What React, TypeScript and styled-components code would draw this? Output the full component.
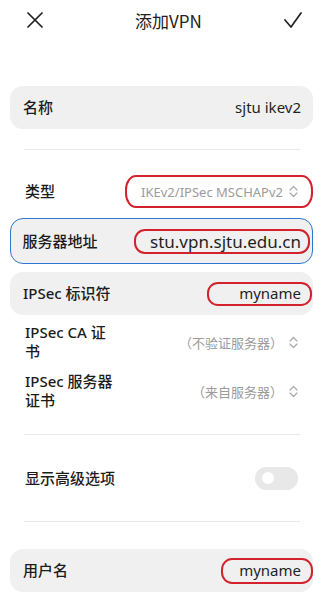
import React from 'react';
import styled, { createGlobalStyle } from 'styled-components';

const GlobalStyle = createGlobalStyle`
  html, body {
    margin: 0;
    padding: 0;
    background: #ffffff;
  }
  body {
    font-family: 'Noto Sans', 'Noto Sans CJK SC', sans-serif;
    color: #1f1f1f;
  }
`;

const Page = styled.div`
  width: 324px;
  height: 595px;
  overflow: hidden;
  background: #ffffff;
`;

const Header = styled.div`
  height: 40px;
  display: flex;
  align-items: center;
  justify-content: space-between;
  padding: 0 22px 0 27px;
`;

const HeaderIcon = styled.svg`
  display: block;
  flex: none;
`;

const Title = styled.div`
  font-size: 17px;
  color: #222;
  font-family: 'Noto Sans CJK SC', 'Noto Sans', sans-serif;
  margin-left: 10px;
`;

const Body = styled.div`
  display: flex;
  flex-direction: column;
  padding: 0 11px 0 10px;
`;

const Card = styled.div<{ $top: number; $focused?: boolean }>`
  box-sizing: border-box;
  margin-top: ${({ $top }) => $top}px;
  height: ${({ $focused }) => ($focused ? 46 : 43)}px;
  display: flex;
  align-items: center;
  justify-content: space-between;
  padding: ${({ $focused }) => ($focused ? '0 11px 0 11.5px' : '0 12px 0 13px')};
  background: #f0f0f0;
  border-radius: 13px;
  border: ${({ $focused }) => ($focused ? '1.5px solid #2b78cc' : 'none')};
`;

const Row = styled.div<{ $top: number; $height: number }>`
  margin-top: ${({ $top }) => $top}px;
  height: ${({ $height }) => $height}px;
  display: flex;
  align-items: center;
  justify-content: space-between;
  padding: 0 15px;
`;

const Divider = styled.div<{ $top: number }>`
  margin: ${({ $top }) => $top}px 13px 0 14px;
  height: 1px;
  background: #e8e8e8;
`;

const Label = styled.div<{ $narrow?: boolean }>`
  font-family: 'Noto Sans', 'Noto Sans CJK SC', sans-serif;
  font-size: 15px;
  font-weight: 500;
  line-height: 19px;
  color: #1c1c1c;
  max-width: ${({ $narrow }) => ($narrow ? '90px' : 'none')};
`;

const Value = styled.div<{ $size?: number }>`
  font-family: 'Noto Sans', 'Noto Sans CJK SC', sans-serif;
  font-size: ${({ $size }) => $size ?? 15}px;
  line-height: 21px;
  color: #1f1f1f;
  white-space: nowrap;
`;

const Picker = styled.div`
  display: flex;
  align-items: center;
  gap: 6px;
  font-family: 'Noto Sans', 'Noto Sans CJK SC', sans-serif;
  font-size: 13px;
  color: #9b9b9b;
  white-space: nowrap;
`;

const Marked = styled.div<{ $left: number; $right: number; $height: number }>`
  box-sizing: border-box;
  display: flex;
  align-items: center;
  height: ${({ $height }) => $height}px;
  padding: 0 ${({ $right }) => $right}px 0 ${({ $left }) => $left}px;
  margin-right: ${({ $right }) => -($right + 2)}px;
  border: 2px solid #d3222c;
  border-radius: 11px / 45%;
`;

const Toggle = styled.div`
  width: 43px;
  height: 23px;
  border-radius: 12px;
  background: #e8e8e8;
  display: flex;
  align-items: center;
  padding-left: 7px;
  box-sizing: border-box;
`;

const Knob = styled.div`
  width: 12px;
  height: 12px;
  border-radius: 50%;
  background: #ffffff;
`;

const UpDown = () => (
  <svg width="9" height="13" viewBox="0 0 9 13" fill="none" stroke="#a8a8a8" strokeWidth="1.2" strokeLinecap="round" strokeLinejoin="round">
    <polyline points="1,5 4.5,1.5 8,5" />
    <polyline points="1,8 4.5,11.5 8,8" />
  </svg>
);

export default function App() {
  return (
    <Page>
      <GlobalStyle />
      <Header>
        <HeaderIcon width="16" height="16" viewBox="0 0 16 16" fill="none" stroke="#222" strokeWidth="1.7" strokeLinecap="round">
          <line x1="1" y1="1" x2="15" y2="15" />
          <line x1="15" y1="1" x2="1" y2="15" />
        </HeaderIcon>
        <Title>添加VPN</Title>
        <HeaderIcon width="18" height="17" viewBox="0 0 18 17" fill="none" stroke="#222" strokeWidth="1.7" strokeLinecap="round" strokeLinejoin="round">
          <polyline points="1,8 7,15 17,1" />
        </HeaderIcon>
      </Header>

      <Body>
        <Card $top={46}>
          <Label>名称</Label>
          <Value>sjtu ikev2</Value>
        </Card>

        <Divider $top={20} />

        <Row $top={23} $height={37}>
          <Label>类型</Label>
          <Marked $left={14} $right={13} $height={33}>
            <Picker>
              IKEv2/IPSec MSCHAPv2
              <UpDown />
            </Picker>
          </Marked>
        </Row>

        <Card $top={8} $focused>
          <Label>服务器地址</Label>
          <Marked $left={14} $right={7} $height={25}>
            <Value $size={17}>stu.vpn.sjtu.edu.cn</Value>
          </Marked>
        </Card>

        <Card $top={8}>
          <Label>IPSec 标识符</Label>
          <Marked $left={30} $right={9} $height={24}>
            <Value>myname</Value>
          </Marked>
        </Card>

        <Row $top={7} $height={40}>
          <Label $narrow>IPSec CA 证书</Label>
          <Picker>
            （不验证服务器）
            <UpDown />
          </Picker>
        </Row>

        <Row $top={8} $height={42}>
          <Label $narrow>IPSec 服务器证书</Label>
          <Picker>
            （来自服务器）
            <UpDown />
          </Picker>
        </Row>

        <Divider $top={22} />

        <Row $top={21} $height={44}>
          <Label>显示高级选项</Label>
          <Toggle>
            <Knob />
          </Toggle>
        </Row>

        <Divider $top={21} />

        <Card $top={27}>
          <Label>用户名</Label>
          <Marked $left={16} $right={10} $height={26}>
            <Value>myname</Value>
          </Marked>
        </Card>
      </Body>
    </Page>
  );
}
